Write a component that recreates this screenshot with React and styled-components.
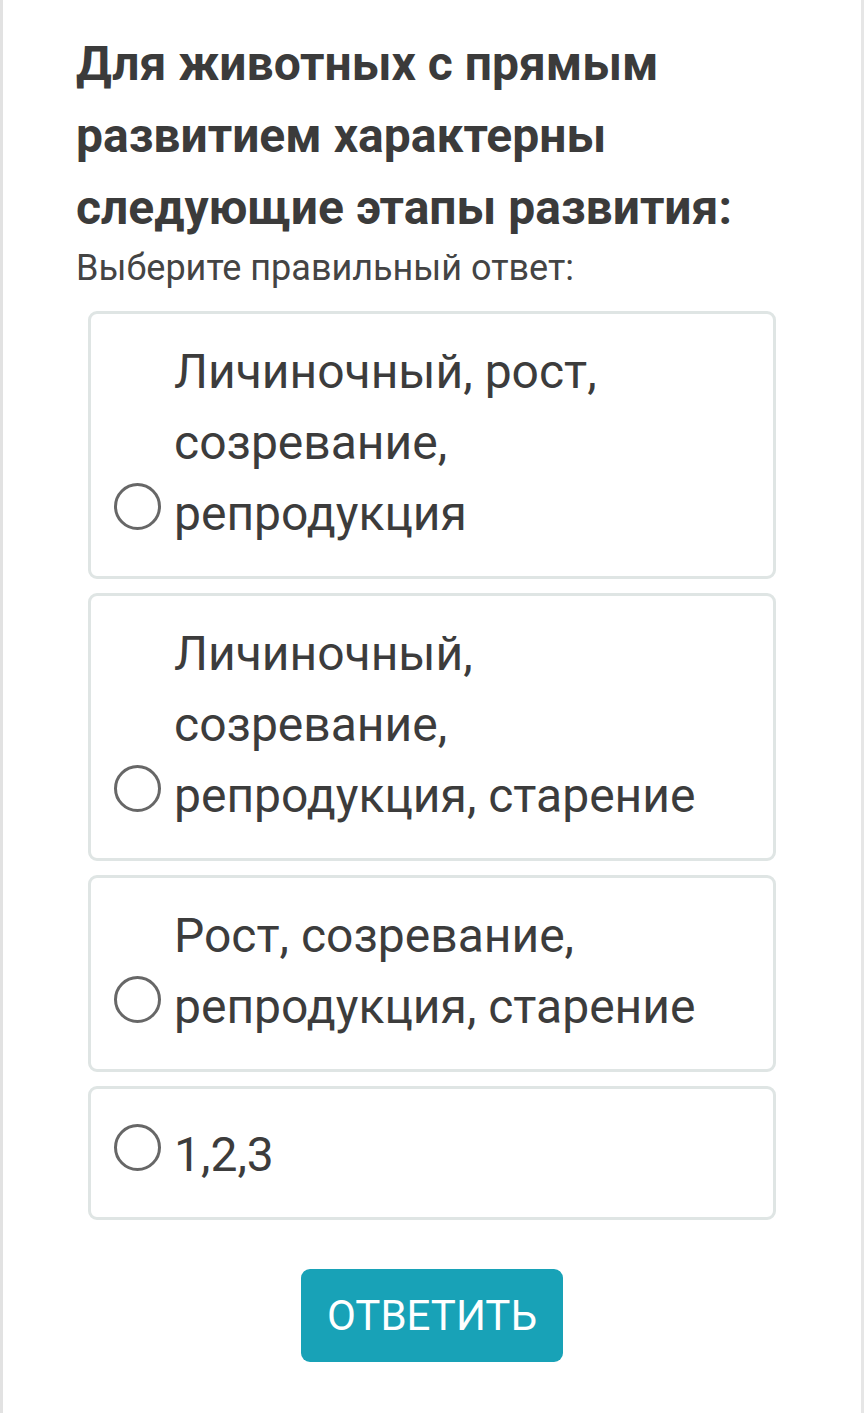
import React, { useState } from "react";
import styled, { createGlobalStyle } from "styled-components";

const GlobalStyle = createGlobalStyle`
   html, body {
      margin: 0;
      padding: 0;
      background: #fff;
   }
   body {
      font-family: Roboto, "Noto Sans", "Liberation Sans", sans-serif;
      color: #3c3c3c;
   }
   * {
      box-sizing: border-box;
   }
`;

const options = [
   "Личиночный, рост, созревание, репродукция",
   "Личиночный, созревание, репродукция, старение",
   "Рост, созревание, репродукция, старение",
   "1,2,3",
];

const App = () => {
   const [selected, setSelected] = useState(null);

   return (
      <>
         <GlobalStyle />
         <Panel>
            <Question>
               Для животных с прямым развитием характерны следующие этапы
               развития:
            </Question>
            <Hint>Выберите правильный ответ:</Hint>
            <Options>
               {options.map((text, i) => (
                  <Option
                     key={text}
                     onClick={() => setSelected(i)}
                     $active={selected === i}
                  >
                     <Radio $checked={selected === i} />
                     <Label>{text}</Label>
                  </Option>
               ))}
            </Options>
            <Footer>
               <Submit>ОТВЕТИТЬ</Submit>
            </Footer>
         </Panel>
      </>
   );
};

const Panel = styled.main`
   width: 864px;
   min-height: 1413px;
   border-left: 3px solid #e2e2e2;
   border-right: 3px solid #e6e6e6;
   padding: 28px 85px 40px 73px;
`;

const Question = styled.h2`
   margin: 0;
   font-size: 48px;
   line-height: 72px;
   font-weight: 700;
   color: #3b3b3b;
`;

const Hint = styled.p`
   margin: 2px 0 21px;
   font-size: 36px;
   line-height: 44px;
   color: #444;
`;

const Options = styled.div`
   display: flex;
   flex-direction: column;
   gap: 14px;
   margin-left: 12px;
`;

const Option = styled.label`
   display: flex;
   align-items: flex-end;
   gap: 13px;
   padding: 22px 40px 27px 23px;
   border: 3px solid #dfe5e4;
   border-radius: 9px;
   background: ${(p) => (p.$active ? "#f4fbfc" : "#fff")};
   cursor: pointer;
`;

const Radio = styled.span`
   flex: none;
   width: 47px;
   height: 47px;
   margin: 13px 0 19px;
   border: 3px solid #676767;
   border-radius: 50%;
   box-shadow: ${(p) => (p.$checked ? "inset 0 0 0 9px #fff, inset 0 0 0 20px #676767" : "none")};
`;

const Label = styled.span`
   font-size: 48px;
   line-height: 71px;
   color: #3c3c3c;
`;

const Footer = styled.div`
   display: flex;
   justify-content: center;
   margin: 49px 0 0 12px;
`;

const Submit = styled.button`
   width: 262px;
   height: 93px;
   border: none;
   border-radius: 9px;
   background: #18a2b7;
   color: #fff;
   font-family: Roboto, "Noto Sans", sans-serif;
   font-size: 42px;
   cursor: pointer;
`;

export default App;
